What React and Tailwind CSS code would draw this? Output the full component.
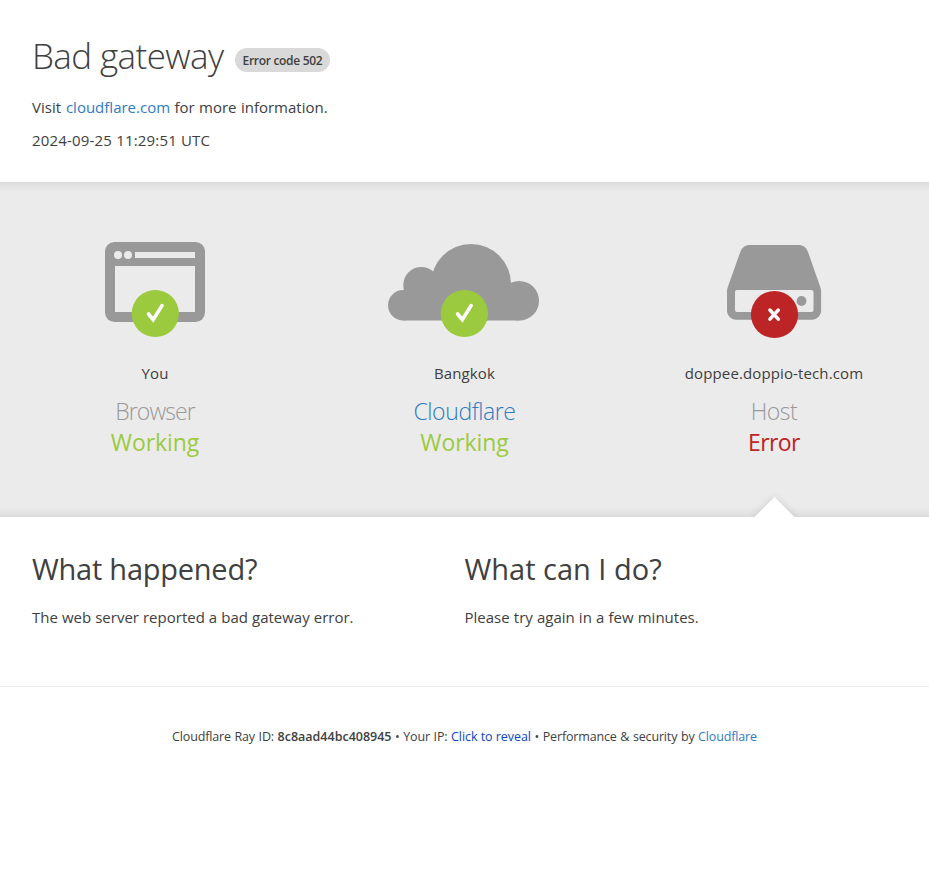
const Check = ({ cx }) => (
  <g>
    <circle cx={cx} cy="313.5" r="23.6" fill="#9bca3e" />
    <path d={`M${cx - 6.8} 314l4.7 5.6 8.800-14`} fill="none" stroke="#fff" strokeWidth="3.6" strokeLinecap="round" />
  </g>
);

const BrowserIcon = () => (
  <svg className="block h-[100px] w-[160px]" viewBox="75 240 160 100">
    <rect x="105" y="242" width="100" height="80" rx="9.5" fill="#999" />
    <circle cx="118" cy="255" r="4" fill="#ebebeb" />
    <circle cx="128" cy="255" r="4" fill="#ebebeb" />
    <path d="M135 252h60v6h-60zM115 266h80v46h-80z" fill="#ebebeb" />
    <Check cx={155.3} />
  </svg>
);

const CloudIcon = () => (
  <svg className="block h-[100px] w-[161px]" viewBox="384 240 161 100">
    <g fill="#999">
      <circle cx="471" cy="284" r="40" />
      <circle cx="421.3" cy="285" r="18" />
      <circle cx="403.3" cy="305.3" r="15.3" />
      <circle cx="519.2" cy="300.8" r="19.8" />
      <path d="M403.3 290h108l7.900 10v20.600H403.3z" />
    </g>
    <Check cx={464.4} />
  </svg>
);

const ServerIcon = () => (
  <svg className="block h-[100px] w-[160px]" viewBox="694 240 160 100">
    <path d="M750 245h48.500c4.500 0 8 2.500 9.500 7l12.300 35q.8 2.500.8 5v18.500c0 5-4 9.200-9.200 9.200H736.200c-5.200 0-9.200-4.200-9.200-9.200V292q0-2.500.8-5l12.500-35c1.500-4.500 5.200-7 9.700-7z" fill="#999" />
    <rect x="735" y="290" width="78.500" height="22" rx="2" fill="#ebebeb" />
    <circle cx="801.500" cy="301" r="4.900" fill="#999" />
    <circle cx="774.500" cy="314.500" r="23.600" fill="#bd2426" />
    <path d="M769.900 310l8.400 9.200M778.300 310l-8.400 9.200" stroke="#fff" strokeWidth="3.400" strokeLinecap="round" />
  </svg>
);

const Column = ({ icon, place, name, nameClass, status, statusClass }) => (
  <div className="flex flex-col items-center whitespace-nowrap">
    {icon}
    <span className="mt-[21px] text-[15px] leading-6 tracking-[0.12px]">{place}</span>
    <h3 className={`mt-[11px] text-[23px] font-light leading-[31px] ${nameClass}`}>{name}</h3>
    <span className={`text-[23px] leading-[31px] ${statusClass}`}>{status}</span>
  </div>
);

export default function App() {
  return (
    <div className="h-[873px] w-[929px] overflow-hidden bg-white font-['Open_Sans','Noto_Sans',sans-serif] text-[15px] text-[#404040]">
      <header className="h-[182px] px-8 pt-8">
        <div className="flex h-[50px] items-start whitespace-nowrap">
          <h1 className="w-[203px] text-[35px] font-light leading-[48px] tracking-[-0.600px]">Bad gateway</h1>
          <span className="mt-4 flex h-6 w-[95px] items-center justify-center rounded-full bg-[#d9d9d9] pt-px text-[12px] font-semibold tracking-[-0.300px]">Error code 502</span>
        </div>
        <p className="mt-[13px] leading-6">
          <span className="[word-spacing:1px]">Visit </span><a className="text-[#2f7bbf]">cloudflare.com</a><span className="[word-spacing:0.500px]"> for more information.</span>
        </p>
        <p className="mt-[9px] leading-6 tracking-[0.180px]">2024-09-25 11:29:51 UTC</p>
      </header>

      <section className="relative h-[335px] overflow-hidden bg-[linear-gradient(to_bottom,#dbdbdb,#e3e3e3_4px,#ebebeb_10px,#ebebeb_calc(100%-10px),#e3e3e3_calc(100%-4px),#dbdbdb)] pt-[58px]">
        <div className="grid grid-cols-[310px_309px_310px]">
          <Column icon={<BrowserIcon />} place="You" name="Browser" nameClass="text-[#999] tracking-[-0.900px]" status="Working" statusClass="text-[#9bca3e] tracking-[-0.100px]" />
          <Column icon={<CloudIcon />} place="Bangkok" name="Cloudflare" nameClass="text-[#2f7bbf] tracking-[-0.400px]" status="Working" statusClass="text-[#9bca3e] tracking-[-0.100px]" />
          <Column icon={<ServerIcon />} place="doppee.doppio-tech.com" name="Host" nameClass="text-[#999] tracking-[-0.500px]" status="Error" statusClass="text-[#bd2426] tracking-[-0.600px]" />
        </div>
        <div className="absolute -bottom-[14.500px] left-[759.500px] h-[29px] w-[29px] rotate-45 bg-white shadow-[0_0_8px_rgba(0,0,0,0.12)]" />
      </section>

      <section className="grid h-[169px] grid-cols-[432.5px_1fr] px-8 pt-8">
        <div>
          <h2 className="text-[29px] leading-[40px] tracking-[-0.240px]">What happened?</h2>
          <p className="mt-4 leading-6 [word-spacing:0.150px]">The web server reported a bad gateway error.</p>
        </div>
        <div>
          <h2 className="text-[29px] leading-[40px]">What can I do?</h2>
          <p className="mt-4 leading-6 [word-spacing:0.250px]">Please try again in a few minutes.</p>
        </div>
      </section>

      <footer className="flex justify-center border-t border-[#ebebeb] pt-[40px] text-[12.500px] leading-5">
        <p className="whitespace-nowrap tracking-[-0.150px] [word-spacing:0.500px]">
          Cloudflare Ray ID: <strong className="font-semibold tracking-normal">8c8aad44bc408945</strong>
          {' • '}Your IP: <button className="tracking-[-0.050px] text-[#0b45c4]">Click to reveal</button>
          {' • '}Performance &amp; security by <a className="text-[#2f7bbf]">Cloudflare</a>
        </p>
      </footer>
    </div>
  );
}
